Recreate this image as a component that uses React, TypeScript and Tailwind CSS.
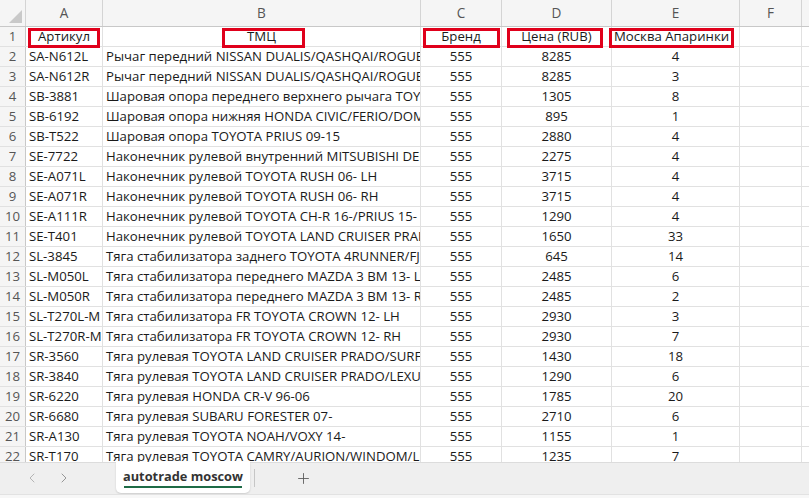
import { ChevronLeft, ChevronRight, Plus } from "lucide-react";

type Row = [string, string, string, string, string];

const rows: Row[] = [
  ["SA-N612L", "Рычаг передний NISSAN DUALIS/QASHQAI/ROGUE LH", "555", "8285", "4"],
  ["SA-N612R", "Рычаг передний NISSAN DUALIS/QASHQAI/ROGUE RH", "555", "8285", "3"],
  ["SB-3881", "Шаровая опора переднего верхнего рычага TOYOTA", "555", "1305", "8"],
  ["SB-6192", "Шаровая опора нижняя HONDA CIVIC/FERIO/DOMANI", "555", "895", "1"],
  ["SB-T522", "Шаровая опора TOYOTA PRIUS 09-15", "555", "2880", "4"],
  ["SE-7722", "Наконечник рулевой внутренний MITSUBISHI DELICA", "555", "2275", "4"],
  ["SE-A071L", "Наконечник рулевой TOYOTA RUSH 06- LH", "555", "3715", "4"],
  ["SE-A071R", "Наконечник рулевой TOYOTA RUSH 06- RH", "555", "3715", "4"],
  ["SE-A111R", "Наконечник рулевой TOYOTA CH-R 16-/PRIUS 15- RH", "555", "1290", "4"],
  ["SE-T401", "Наконечник рулевой TOYOTA LAND CRUISER PRADO 120", "555", "1650", "33"],
  ["SL-3845", "Тяга стабилизатора заднего TOYOTA 4RUNNER/FJ CRUISER", "555", "645", "14"],
  ["SL-M050L", "Тяга стабилизатора переднего MAZDA 3 BM 13- LH", "555", "2485", "6"],
  ["SL-M050R", "Тяга стабилизатора переднего MAZDA 3 BM 13- RH", "555", "2485", "2"],
  ["SL-T270L-M", "Тяга стабилизатора FR TOYOTA CROWN 12- LH", "555", "2930", "3"],
  ["SL-T270R-M", "Тяга стабилизатора FR TOYOTA CROWN 12- RH", "555", "2930", "7"],
  ["SR-3560", "Тяга рулевая TOYOTA LAND CRUISER PRADO/SURF 95", "555", "1430", "18"],
  ["SR-3840", "Тяга рулевая TOYOTA LAND CRUISER PRADO/LEXUS GX", "555", "1290", "6"],
  ["SR-6220", "Тяга рулевая HONDA CR-V 96-06", "555", "1785", "20"],
  ["SR-6680", "Тяга рулевая SUBARU FORESTER 07-", "555", "2710", "6"],
  ["SR-A130", "Тяга рулевая TOYOTA NOAH/VOXY 14-", "555", "1155", "1"],
  ["SR-T170", "Тяга рулевая TOYOTA CAMRY/AURION/WINDOM/LEXUS ES", "555", "1235", "7"],
];

const cell = "shrink-0 h-full overflow-hidden whitespace-nowrap border-r border-[#e1e1e1] flex items-center";
const colHead = "shrink-0 h-full border-r border-[#d4d4d4] flex items-center justify-center";
const rowHead = "w-[26px] shrink-0 h-full bg-[#f5f5f5] border-r border-[#c8c8c8] flex items-center justify-center text-[#555]";

function RedBox({ className }: { className: string }) {
  return <div className={`absolute top-[1px] h-[20px] border-[3px] border-[#e0001b] ${className}`} />;
}

export default function App() {
  return (
    <div
      className="w-[809px] h-[498px] overflow-hidden bg-white text-[13.2px] text-[#1a1a1a] flex flex-col"
      style={{ fontFamily: "'Open Sans', 'Noto Sans', sans-serif" }}
    >
      <div className="h-[462px] overflow-hidden">
        {/* column letters */}
        <div className="flex h-[27px] bg-[#f5f5f5] border-b border-[#c8c8c8] text-[#555] text-[13.6px]">
          <div className="w-[26px] shrink-0 h-full border-r border-[#d4d4d4] relative">
            <div className="absolute right-[3px] bottom-[3px] w-0 h-0 border-l-[13px] border-l-transparent border-b-[13px] border-b-[#c9c9c9]" />
          </div>
          <div className={`${colHead} w-[77px]`}>A</div>
          <div className={`${colHead} w-[318px]`}>B</div>
          <div className={`${colHead} w-[81px]`}>C</div>
          <div className={`${colHead} w-[110px]`}>D</div>
          <div className={`${colHead} w-[128px]`}>E</div>
          <div className={`${colHead} w-[62px]`}>F</div>
          <div className="flex-1" />
        </div>

        {/* header row with marked titles */}
        <div className="relative flex h-[20px] border-b border-[#e1e1e1]">
          <div className={rowHead}>1</div>
          <div className={`${cell} w-[77px] justify-center`}>Артикул</div>
          <div className={`${cell} w-[318px] justify-center`}>ТМЦ</div>
          <div className={`${cell} w-[81px] justify-center`}>Бренд</div>
          <div className={`${cell} w-[110px] justify-center`}>Цена (RUB)</div>
          <div className={`${cell} w-[128px] pl-[2px] overflow-visible`}>Москва Апаринки</div>
          <div className={`${cell} w-[62px]`} />
          <div className="flex-1" />
          <RedBox className="left-[28px] w-[72px]" />
          <RedBox className="left-[222px] w-[83px]" />
          <RedBox className="left-[423px] w-[77px]" />
          <RedBox className="left-[507px] w-[96px]" />
          <RedBox className="left-[609px] w-[125px]" />
        </div>

        {rows.map((r, i) => (
          <div key={r[0]} className="flex h-[20px] border-b border-[#e1e1e1]">
            <div className={rowHead}>{i + 2}</div>
            <div className={`${cell} w-[77px] pl-[3px]`}>{r[0]}</div>
            <div className={`${cell} w-[318px] pl-[3px]`}>{r[1]}</div>
            <div className={`${cell} w-[81px] justify-center`}>{r[2]}</div>
            <div className={`${cell} w-[110px] justify-center`}>{r[3]}</div>
            <div className={`${cell} w-[128px] justify-center`}>{r[4]}</div>
            <div className={`${cell} w-[62px]`} />
            <div className="flex-1" />
          </div>
        ))}
      </div>

      {/* sheet tabs */}
      <div className="h-[32px] bg-[#efefef] border-t border-[#dcdcdc] flex items-start text-[#666]">
        <div className="w-[116px] h-[30px] flex items-center gap-[16px] pl-[24px]">
          <ChevronLeft size={16} strokeWidth={1.3} className="text-[#aaa]" />
          <ChevronRight size={16} strokeWidth={1.3} className="text-[#888]" />
        </div>
        <div className="w-[134px] h-[31px] -mt-px bg-white rounded-b-[5px] shadow-[0_1px_2px_rgba(0,0,0,0.15)] flex flex-col items-center justify-center">
          <span className="font-bold text-[12.8px] text-[#333] leading-[18px]">autotrade moscow</span>
          <span className="w-[118px] h-[2px] bg-[#1e6b46] mt-[1px]" />
        </div>
        <div className="w-px h-[18px] bg-[#c6c6c6] mt-[6px] ml-[4px]" />
        <div className="ml-[40px] h-[30px] flex items-center">
          <Plus size={17} strokeWidth={1.2} className="text-[#555]" />
        </div>
      </div>
      <div className="flex-1 bg-[#f7f7f7] border-t border-[#e2e2e2]" />
    </div>
  );
}
